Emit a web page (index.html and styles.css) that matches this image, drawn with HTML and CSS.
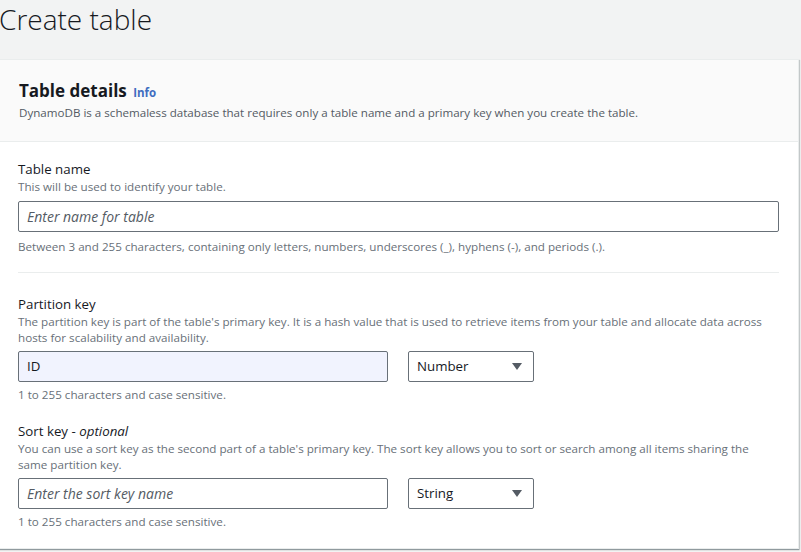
FILE: index.html
```html
<!DOCTYPE html>
<html lang="en">
<head>
<meta charset="utf-8">
<title>Create table</title>
<link rel="stylesheet" href="styles.css">
</head>
<body>
<h1 class="page-title">Create table</h1>
<section class="card">
  <header class="card-header">
    <h2 class="card-title">Table details <a class="info" href="#">Info</a></h2>
    <p class="card-desc">DynamoDB is a schemaless database that requires only a table name and a primary key when you create the table.</p>
  </header>
  <div class="card-body">
    <div class="field">
      <div class="label">Table name</div>
      <div class="desc">This will be used to identify your table.</div>
      <div class="input wide placeholder">Enter name for table</div>
      <div class="hint">Between 3 and 255 characters, containing only letters, numbers, underscores (_), hyphens (-), and periods (.).</div>
    </div>
    <hr class="divider">
    <div class="field">
      <div class="label">Partition key</div>
      <div class="desc">The partition key is part of the table's primary key. It is a hash value that is used to retrieve items from your table and allocate data across hosts for scalability and availability.</div>
      <div class="row">
        <div class="input key filled">ID</div>
        <div class="select">Number<span class="caret"></span></div>
      </div>
      <div class="hint">1 to 255 characters and case sensitive.</div>
    </div>
    <div class="field sort">
      <div class="label">Sort key - <em>optional</em></div>
      <div class="desc">You can use a sort key as the second part of a table's primary key. The sort key allows you to sort or search among all items sharing the same partition key.</div>
      <div class="row">
        <div class="input key placeholder">Enter the sort key name</div>
        <div class="select">String<span class="caret"></span></div>
      </div>
      <div class="hint">1 to 255 characters and case sensitive.</div>
    </div>
  </div>
</section>
</body>
</html>
```
FILE: styles.css
```css
* { box-sizing: border-box; }
html, body { margin: 0; padding: 0; }
body {
  background: #f2f3f3;
  font-family: "Open Sans", "Noto Sans", sans-serif;
  color: #16191f;
  width: 801px;
  height: 552px;
  overflow: hidden;
}
.page-title {
  margin: 0 0 0 -1px;
  height: 59px;
  padding-top: 1px;
  font-size: 28px;
  line-height: 36px;
  font-weight: 300;
  color: #16191f;
}
.card {
  margin: 0 2px 0 -1px;
  background: #fff;
  border: 1px solid #eaeded;
  border-left: none;
  box-shadow: 0 1px 1px 0 rgba(0,28,36,.3), 1px 1px 1px 0 rgba(0,28,36,.15);
}
.card-header {
  background: #fafafa;
  border-bottom: 1px solid #eaeded;
  height: 82px;
  padding: 20px 19px 0 20px;
}
.card-title {
  margin: 0;
  font-size: 17px;
  line-height: 22px;
  font-weight: 700;
}
.info {
  font-size: 11.5px;
  font-weight: 700;
  color: #3f6dc0;
  text-decoration: none;
  margin-left: 2px;
}
.card-desc {
  margin: 1px 0 0;
  font-size: 11.6px;
  line-height: 16px;
  color: #545b64;
}
.card-body {
  padding: 18px 19px 18px 19px;
}
.label {
  font-size: 13.3px;
  line-height: 19px;
  color: #16191f;
}
.label em { font-style: italic; }
.desc, .hint {
  font-size: 11.65px;
  line-height: 16px;
  color: #687078;
}
.input, .select {
  height: 31px;
  border: 1px solid #687078;
  border-radius: 2px;
  font-size: 13.3px;
  line-height: 29px;
  padding: 0 8px;
  background: #fff;
}
.input.wide { margin: 6px 0 7px 0; }
.placeholder { font-style: italic; color: #545b64; font-size: 14px; }
.filled { background: #f1f3fe; color: #16191f; }
.row {
  display: flex;
  gap: 20px;
  margin: 5px 0 5px;
}
.key { width: 370px; }
.select {
  width: 126px;
  display: flex;
  align-items: center;
  justify-content: space-between;
  padding-right: 11px;
}
.caret {
  width: 0;
  height: 0;
  border-left: 5px solid transparent;
  border-right: 5px solid transparent;
  border-top: 7px solid #545b64;
}
.divider {
  border: none;
  border-top: 1px solid #eaeded;
  margin: 17px 0 22px 0;
}
.sort { margin-top: 19px; }
```
